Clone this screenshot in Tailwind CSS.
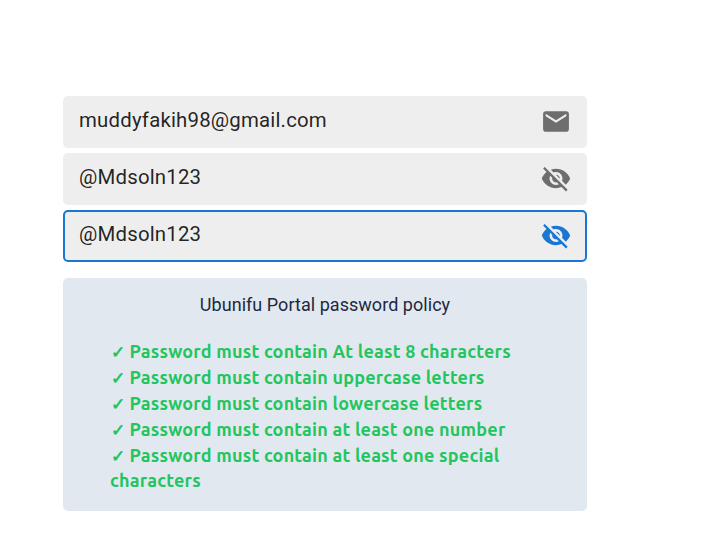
<!DOCTYPE html>
<html lang="en"><head><meta charset="utf-8"><title>Password</title>
<script src="https://cdn.jsdelivr.net/npm/@tailwindcss/browser@4"></script></head>
<body class="bg-white font-['Roboto',sans-serif]">
<main class="ml-[63px] w-[524px] pt-24">
<div class="flex flex-col gap-[5px] text-[20.4px] text-black/87">
<div class="flex h-[52px] items-center justify-between rounded-[5px] bg-[#eeeeee] pl-4 pr-4"><span class="pb-1 tracking-[0.00938em]">muddyfakih98@gmail.com</span><svg class="mb-px size-[31px] text-[#6e6e6e]" viewBox="-0.39 0 24 24" fill="currentColor"><path d="M20 4H4c-1.1 0-1.99.9-1.99 2L2 18c0 1.1.9 2 2 2h16c1.1 0 2-.9 2-2V6c0-1.1-.9-2-2-2zm0 4l-8 5-8-5V6l8 5 8-5v2z"/></svg></div>
<div class="flex h-[52px] items-center justify-between rounded-[5px] bg-[#eeeeee] pl-4 pr-4"><span class="pb-1 tracking-[0.00938em]">@Mdsoln123</span><svg class="mb-px size-[31px] text-[#6e6e6e]" viewBox="-0.39 0 24 24" fill="currentColor"><path d="M12 7c2.76 0 5 2.24 5 5 0 .65-.13 1.26-.36 1.83l2.92 2.92c1.51-1.26 2.7-2.89 3.43-4.75-1.73-4.39-6-7.5-11-7.5-1.4 0-2.74.25-3.98.7l2.16 2.16C10.74 7.13 11.35 7 12 7zM2 4.27l2.28 2.28.46.46C3.08 8.3 1.78 10.02 1 12c1.73 4.39 6 7.5 11 7.5 1.55 0 3.03-.3 4.38-.84l.42.42L19.73 22 21 20.73 3.27 3 2 4.27zM7.53 9.8l1.55 1.55c-.05.21-.08.43-.08.65 0 1.66 1.34 3 3 3 .22 0 .44-.03.65-.08l1.55 1.55c-.67.33-1.41.53-2.2.53-2.76 0-5-2.24-5-5 0-.79.2-1.53.53-2.2zm4.31-.78l3.15 3.15.02-.16c0-1.66-1.34-3-3-3l-.17.01z"/></svg></div>
<div class="flex h-[52px] items-center justify-between rounded-[5px] border-2 border-[#1976d2] bg-[#eeeeee] pl-3.5 pr-3.5"><span class="pb-1 tracking-[0.00938em]">@Mdsoln123</span><svg class="mb-px size-[31px] text-[#1976d2]" viewBox="-0.39 0 24 24" fill="currentColor"><path d="M12 7c2.76 0 5 2.24 5 5 0 .65-.13 1.26-.36 1.83l2.92 2.92c1.51-1.26 2.7-2.89 3.43-4.75-1.73-4.39-6-7.5-11-7.5-1.4 0-2.74.25-3.98.7l2.16 2.16C10.74 7.13 11.35 7 12 7zM2 4.27l2.28 2.28.46.46C3.08 8.3 1.78 10.02 1 12c1.73 4.39 6 7.5 11 7.5 1.55 0 3.03-.3 4.38-.84l.42.42L19.73 22 21 20.73 3.27 3 2 4.27zM7.53 9.8l1.55 1.55c-.05.21-.08.43-.08.65 0 1.66 1.34 3 3 3 .22 0 .44-.03.65-.08l1.55 1.55c-.67.33-1.41.53-2.2.53-2.76 0-5-2.24-5-5 0-.79.2-1.53.53-2.2zm4.31-.78l3.15 3.15.02-.16c0-1.66-1.34-3-3-3l-.17.01z"/></svg></div>
</div>
<section class="mt-4 h-[233px] rounded-[5px] bg-[#e2e8f0] pt-[13px]">
<h2 class="text-center text-[18px] leading-7 tracking-[0.04px] text-slate-800">Ubunifu Portal password policy</h2>
<ul class="mt-[19px] whitespace-nowrap pl-[47px] font-['Ubuntu','Open_Sans',sans-serif] text-[18px] font-bold leading-[26px] tracking-[0.21px] text-[#22c55e]">
<li><span class="mr-[0.2px] pl-[0.6px] font-['Open_Sans',sans-serif] text-[17px] leading-none">✓</span> Password must contain At least 8 characters</li>
<li><span class="mr-[0.2px] pl-[0.6px] font-['Open_Sans',sans-serif] text-[17px] leading-none">✓</span> Password must contain uppercase letters</li>
<li><span class="mr-[0.2px] pl-[0.6px] font-['Open_Sans',sans-serif] text-[17px] leading-none">✓</span> Password must contain lowercase letters</li>
<li><span class="mr-[0.2px] pl-[0.6px] font-['Open_Sans',sans-serif] text-[17px] leading-none">✓</span> Password must contain at least one number</li>
<li><span class="mr-[0.2px] pl-[0.6px] font-['Open_Sans',sans-serif] text-[17px] leading-none">✓</span> Password must contain at least one special<span class="block leading-6">characters</span></li>
</ul></section></main></body></html>
